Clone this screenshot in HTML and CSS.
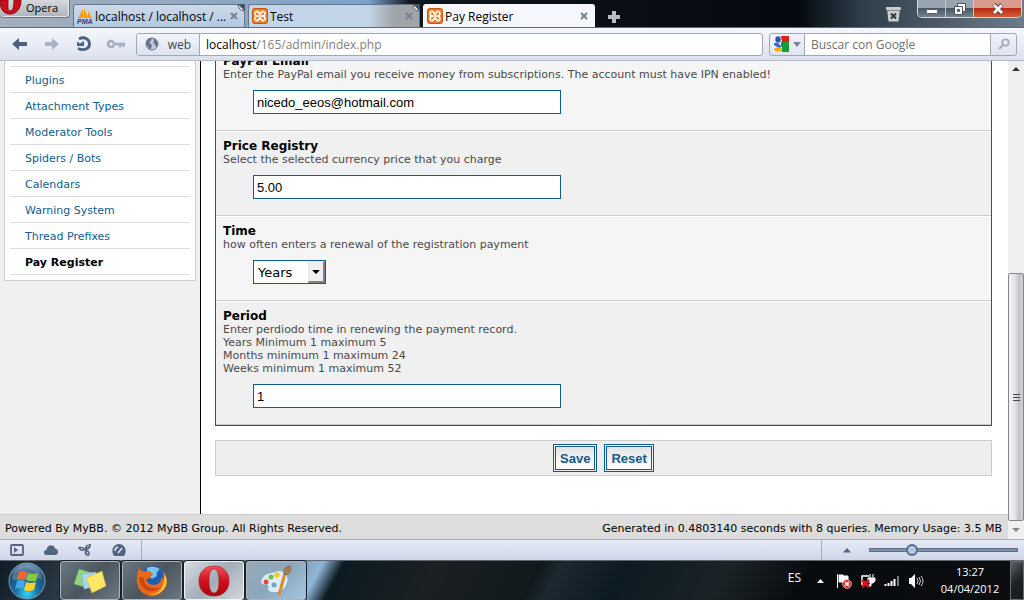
FILE: index.html
```html
<!DOCTYPE html>
<html lang="en">
<head>
    <meta charset="UTF-8">
    <meta name="viewport" content="width=device-width, initial-scale=1.0">
    <title>Pay Register</title>
    <link rel="stylesheet" href="styles.css">
</head>
<body>

    <!-- shared symbols -->
    <svg class="symbols" aria-hidden="true">
        <symbol id="xampp" viewBox="0 0 16 16">
            <rect x=".5" y=".5" width="15" height="15" rx="2" fill="#f47a20" stroke="#c9540c"/>
            <path d="M5.5 3.5C2.5 3 2.500 7 4.500 8C2.500 9 2.500 13 5.500 12.500C7.500 12.300 6.500 10 8 10C9.500 10 8.500 12.300 10.500 12.500C13.500 13 13.500 9 11.500 8C13.500 7 13.500 3 10.500 3.500C8.500 3.700 9.500 6 8 6C6.500 6 7.500 3.700 5.500 3.500Z" fill="none" stroke="#fff" stroke-width="1.800"/>
            <path d="M5 8h6" stroke="#fff" stroke-width="1.500"/>
        </symbol>
        <symbol id="close" viewBox="0 0 8 8">
            <path d="M1 1l6 6M7 1l-6 6" stroke="#778193" stroke-width="2"/>
        </symbol>
        <symbol id="fold" viewBox="0 0 8 8">
            <path d="M0 0L8 8V0Z" fill="#465566"/>
            <path d="M1 0Q1 7 8 7Z" fill="#e9edf2" stroke="#59636f"/>
        </symbol>
    </svg>

    <header class="titlebar">
        <button class="opera-menu">
            <svg width="22" height="16" viewBox="0 0 22 16"><path d="M0 0C0 10 4 14 10 14S21 9 21 0H14C14 7 13 11 10 11S8 6 8 0Z" fill="#c9101c" stroke="#8d0711"/></svg>
            Opera
        </button>
        <nav class="tabs">
            <div class="tab">
                <svg width="16" height="16" viewBox="0 0 16 16">
                    <path d="M1 10L6 1V10ZM7 10V0L11 10ZM11 10V3L15 10Z" fill="#f89c0e"/>
                    <text x="0" y="16" class="pma">PMA</text>
                </svg>
                <span class="tab-title">localhost / localhost / ...</span>
                <button class="tab-close" aria-label="Close tab"><svg width="8" height="8"><use href="#close"/></svg></button>
                <svg class="fold" width="8" height="8"><use href="#fold"/></svg>
            </div>
            <div class="tab tab-dim">
                <svg width="16" height="16"><use href="#xampp"/></svg>
                <span class="tab-title">Test</span>
                <button class="tab-close" aria-label="Close tab"><svg width="8" height="8"><use href="#close"/></svg></button>
                <svg class="fold" width="8" height="8"><use href="#fold"/></svg>
            </div>
            <div class="tab tab-active">
                <svg width="16" height="16"><use href="#xampp"/></svg>
                <span class="tab-title">Pay Register</span>
                <button class="tab-close" aria-label="Close tab"><svg width="8" height="8"><use href="#close"/></svg></button>
            </div>
        </nav>
        <button class="new-tab" aria-label="New tab">
            <svg width="12" height="12" viewBox="0 0 12 12"><path d="M6 0v12M0 6h12" stroke="#b9bdc1" stroke-width="4"/></svg>
        </button>
        <button class="closed-tabs" aria-label="Closed tabs">
            <svg width="15" height="15" viewBox="0 0 15 15"><path d="M1 2h13l-1.500 12.500h-10z" fill="#c9cdd0"/><rect y="0" width="15" height="3" rx="1" fill="#c9cdd0"/><path d="M1 3.500h13" stroke="#7f868b"/><path d="M5 6.500l5 5M10 6.500l-5 5" stroke="#2d343a" stroke-width="1.800"/></svg>
        </button>
        <div class="window-buttons">
            <button aria-label="Minimize"><svg width="12" height="12" viewBox="0 0 12 12"><rect x=".5" y="6.500" width="11" height="4" rx="1" fill="#fff" stroke="#59626c"/></svg></button>
            <button aria-label="Restore"><svg width="12" height="12" viewBox="0 0 12 12"><path d="M3.500.5h8v8h-8z" fill="#fff" stroke="#4a545f"/><path d="M.5 3.500h8v8h-8z" fill="#fff" stroke="#4a545f"/><path d="M3.500 6.500h2v2h-2z" fill="#788490" stroke="#4a545f"/></svg></button>
            <button class="window-close" aria-label="Close"><svg width="12" height="12" viewBox="0 0 12 12"><path d="M2 1.500l8 9M10 1.500l-8 9" stroke="#5d4145" stroke-width="4.500"/><path d="M2 2l8 8M10 2l-8 8" stroke="#fff" stroke-width="2.800"/></svg></button>
        </div>
    </header>

    <div class="toolbar">
        <button class="tool" aria-label="Back"><svg width="16" height="14" viewBox="0 0 16 14"><path d="M0 7L7 1V5H15V9H7V13Z" fill="#4b607e"/></svg></button>
        <button class="tool" aria-label="Forward"><svg width="16" height="14" viewBox="0 0 16 14"><path d="M15 7L8 1V5H1V9H8V13Z" fill="#aab3c3"/></svg></button>
        <button class="tool" aria-label="Reload"><svg width="16" height="16" viewBox="0 0 16 16"><path d="M3 3C8 0 13.500 3 13.500 8S8 15 2 12.500" fill="none" stroke="#4b607e" stroke-width="2.800"/><path d="M1 10V5.500L4 7.500L8 5V10Z" fill="#4b607e"/></svg></button>
        <button class="tool" aria-label="Wand"><svg width="20" height="10" viewBox="0 0 20 10"><circle cx="5" cy="5" r="3" fill="none" stroke="#a5afc0" stroke-width="2.500"/><path d="M8 5h11M14 5v3.500M17.500 5v3" stroke="#a5afc0" stroke-width="2.500"/></svg></button>
        <div class="address">
            <button class="badge">
                <svg width="14" height="14" viewBox="0 0 14 14"><circle cx="7" cy="7" r="6" fill="#c3cbd9" stroke="#6c7a92"/><path d="M1 4L4 1L7 1L6 4L4 5L6 7L7 9L5 13L3 10L1 7ZM8 1L11 3L13 6L12 10L10 9L10 7L8 6L9 4Z" fill="#66758e"/></svg>
                web
            </button>
            <div class="url" role="textbox" tabindex="0" aria-label="Address">localhost<span class="path">/165/admin/index.php</span></div>
        </div>
        <div class="search">
            <button class="engine" aria-label="Search engine">
                <svg width="16" height="16" viewBox="0 0 16 16"><path d="M8 0h8v6H9z" fill="#e0201b"/><path d="M8 6h8v10H8z" fill="#169a3d"/><path d="M0 0h8v5L6 8l3 3v5H0z" fill="#f6f8fc"/><ellipse cx="5" cy="3.500" rx="2.700" ry="3.300" fill="#2356b5"/><path d="M1 7h4l4 4-3 1L1 9Z" fill="#2f6ed0"/><ellipse cx="5" cy="13.500" rx="4" ry="2.300" fill="#f3ad14"/></svg>
                <svg width="8" height="5" viewBox="0 0 8 5"><path d="M0 0h8L4 5Z" fill="#7b859a"/></svg>
            </button>
            <input class="search-input" type="text" placeholder="Buscar con Google" aria-label="Search">
            <button class="go" aria-label="Go"><svg width="12" height="12" viewBox="0 0 12 12"><circle cx="7.500" cy="4.500" r="3.200" fill="none" stroke="#a4abba" stroke-width="1.800"/><path d="M5 7L1 11" stroke="#a4abba" stroke-width="2.200"/></svg></button>
        </div>
    </div>

    <div class="viewport">
        <div class="page">
            <div class="columns">
                <aside class="sidebar">
                    <ul class="menu">
                        <li><a href="#">Plugins</a></li>
                        <li><a href="#">Attachment Types</a></li>
                        <li><a href="#">Moderator Tools</a></li>
                        <li><a href="#">Spiders / Bots</a></li>
                        <li><a href="#">Calendars</a></li>
                        <li><a href="#">Warning System</a></li>
                        <li><a href="#">Thread Prefixes</a></li>
                        <li><a href="#" class="current">Pay Register</a></li>
                    </ul>
                </aside>
                <main class="content">
                    <form>
                        <div class="settings">
                            <div class="row">
                                <label for="email">PayPal Email</label>
                                <p>Enter the PayPal email you receive money from subscriptions. The account must have IPN enabled!</p>
                                <input type="text" id="email" value="nicedo_eeos@hotmail.com">
                            </div>
                            <div class="row alt">
                                <label for="price">Price Registry</label>
                                <p>Select the selected currency price that you charge</p>
                                <input type="text" id="price" value="5.00">
                            </div>
                            <div class="row">
                                <label for="time">Time</label>
                                <p>how often enters a renewal of the registration payment</p>
                                <div class="select">
                                    <select id="time">
                                        <option>Weeks</option>
                                        <option>Months</option>
                                        <option selected>Years</option>
                                    </select>
                                </div>
                            </div>
                            <div class="row alt">
                                <label for="period">Period</label>
                                <p>Enter perdiodo time in renewing the payment record.<br>Years Minimum 1 maximum 5<br>Months minimum 1 maximum 24<br>Weeks minimum 1 maximum 52</p>
                                <input type="text" id="period" value="1">
                            </div>
                        </div>
                        <div class="form-buttons">
                            <button type="submit">Save</button>
                            <button type="reset">Reset</button>
                        </div>
                    </form>
                </main>
            </div>
            <footer class="footer">
                <span>Powered By MyBB. © 2012 MyBB Group. All Rights Reserved.</span>
                <span>Generated in 0.4803140 seconds with 8 queries. Memory Usage: 3.5 MB</span>
            </footer>
        </div>
        <div class="scrollbar">
            <svg width="16" height="16" viewBox="0 0 16 16"><path d="M4 10L8 6l4 4Z" fill="#303030"/></svg>
            <div class="scroll-track"></div>
            <div class="scroll-thumb"><svg width="7" height="9" viewBox="0 0 7 9"><path d="M0 1.500h7M0 4.500h7M0 7.500h7" stroke="#45484d"/></svg></div>
            <svg width="16" height="18" viewBox="0 0 16 18"><path d="M4 7h8l-4 4Z" fill="#858585"/></svg>
        </div>
    </div>

    <div class="statusbar">
        <div class="status-icons">
            <button aria-label="Panels"><svg width="14" height="12" viewBox="0 0 14 12"><rect x="1" y="1" width="12" height="10" rx="1" fill="none" stroke="#536480" stroke-width="1.800"/><path d="M4 3v6L8 6Z" fill="#536480"/></svg></button>
            <button aria-label="Opera Link"><svg width="14" height="12" viewBox="0 0 14 12"><path d="M3 11C-1 11-1 6 2.500 6C3 0 10 0 11 4.500C15 5 15 11 11 11Z" fill="#536480"/></svg></button>
            <button aria-label="Opera Unite"><svg width="14" height="12" viewBox="0 0 14 12"><path d="M7 6C6 2 9 0 13 0C13 4 11 6 7 6ZM7 6C5 8 1 7 0 3C4 2 7 3 7 6ZM7 6C11 6 13 8 11 12C7 12 6 9 7 6Z" fill="#536480"/><path d="M9 3l2-1.500M3 4.500l2 .5M9 8l1 2" stroke="#dfe3f0"/></svg></button>
            <button aria-label="Opera Turbo"><svg width="14" height="12" viewBox="0 0 14 12"><path d="M2 12C-2 6 2 0 7 0S16 6 12 12Z" fill="#536480"/><path d="M6 9L10 4M3 7q0-3 3-4" stroke="#e2e6f2" stroke-width="1.500" fill="none"/></svg></button>
        </div>
        <div class="zoom">
            <svg width="8" height="5" viewBox="0 0 8 5"><path d="M0 4.500L4 0l4 4.500Z" fill="#536480"/></svg>
            <input type="range" min="0" max="100" value="27" aria-label="Zoom">
        </div>
    </div>

    <div class="taskbar">
        <button class="start" aria-label="Start">
            <svg width="38" height="38" viewBox="0 0 38 38">
                <defs><radialGradient id="orb" cx=".5" cy=".85" r=".9"><stop offset="0" stop-color="#35d3f5"/><stop offset=".35" stop-color="#1673a8"/><stop offset=".7" stop-color="#1c4d75"/><stop offset="1" stop-color="#7fa8c4"/></radialGradient></defs>
                <circle cx="19" cy="19" r="18" fill="url(#orb)" stroke="#7f9bb0"/>
                <path d="M4 17C5 7 12 3 19 3S33 8 34 17C24 14 14 20 4 17Z" fill="#fff" opacity=".22"/>
                <path d="M11 10Q15 8 19 10L17 18Q13 16 9 18Z" fill="#f1672d"/>
                <path d="M20 11Q25 13 30 11L28 19Q23 20 18 18Z" fill="#8dc63f"/>
                <path d="M9 19Q13 17 17 19L15 27Q11 25 7 27Z" fill="#46a7e8"/>
                <path d="M18 20Q23 22 28 20L26 28Q21 30 16 28Z" fill="#fccd2d"/>
            </svg>
        </button>
        <div class="tasks">
            <button class="task" aria-label="Sticky Notes">
                <svg width="34" height="30" viewBox="0 0 34 30"><path d="M6 3L19 7L15 22L1 18Z" fill="#8fd581" stroke="#63a85a" stroke-width=".5"/><path d="M9 8L23 6L26 20L11 23Z" fill="#a8d7fb" stroke="#6da8d8" stroke-width=".5"/><path d="M13 12L29 5L33 20L19 27Z" fill="#fde765" stroke="#c9aa2d" stroke-width=".5"/></svg>
            </button>
            <button class="task" aria-label="Firefox">
                <svg width="32" height="32" viewBox="0 0 32 32"><circle cx="17" cy="14" r="13" fill="#1b5fae"/><path d="M11 3Q17 0 24 4Q19 8 21 11L16 14L11 9Z" fill="#7cc4ee"/><path d="M3 3Q5 7 10 6Q13 5 16 8Q18 11 14 12Q12 15 10 14Q12 20 18 20Q25 19 26 12L28 14Q28 9 26 6Q35 15 28 25Q22 32 14 31Q3 29 1 18Q0 10 3 3Z" fill="#e8691b"/><path d="M28 8Q34 17 27 25Q21 31 14 29Q24 29 27 20Q29 14 28 8Z" fill="#fbc635"/><path d="M3 12Q3 23 13 26Q20 27 24 22Q17 25 12 21Q8 19 8 13Z" fill="#c94512"/></svg>
            </button>
            <button class="task task-open" aria-label="Opera">
                <svg width="32" height="32" viewBox="0 0 32 32"><defs><linearGradient id="red" x2="0" y2="1"><stop offset="0" stop-color="#f3525a"/><stop offset=".5" stop-color="#d1101b"/><stop offset="1" stop-color="#a9070f"/></linearGradient></defs><path fill-rule="evenodd" d="M16 1C25 1 31 7 31 16S25 31 16 31S1 25 1 16S7 1 16 1ZM16 4C12 4 11 10 11 16S12 28 16 28S21 22 21 16S20 4 16 4Z" fill="url(#red)" stroke="#a60d17" stroke-width=".6"/></svg>
            </button>
            <button class="task task-paint" aria-label="Paint">
                <svg width="34" height="32" viewBox="0 0 34 32"><path d="M14 7C23 3 30 8 29 16C28 25 18 30 11 27C6 25 11 21 8 20C4 20 1 20 2 15C4 10 8 8 14 7Z" fill="#dcecf8" stroke="#79a6c6"/><circle cx="7" cy="17" r="2.500" fill="#e2493c"/><circle cx="12" cy="12" r="2.500" fill="#70bd48"/><circle cx="18" cy="10" r="2.700" fill="#f6c829"/><circle cx="15" cy="20" r="2.500" fill="#6ba5cf"/><path d="M20 30L26 8" stroke="#e08a30" stroke-width="3"/><path d="M25 9Q24 2 31 1Q34 5 28 10Z" fill="#a57b50" stroke="#805932" stroke-width=".6"/></svg>
            </button>
        </div>
        <div class="tray">
            <span class="lang">ES</span>
            <svg class="expand" width="7" height="4" viewBox="0 0 7 4"><path d="M0 4L3.500 0L7 4Z" fill="#fff"/></svg>
            <svg width="16" height="16" viewBox="0 0 16 16"><path d="M1.500 1v14M3 2h4l1 1h4v6H3Z" stroke="#fff" fill="#fff"/><circle cx="11" cy="11" r="4.500" fill="#d9342b" stroke="#fff" stroke-width=".5"/><path d="M9 9l4 4M13 9l-4 4" stroke="#fff" stroke-width="1.500"/></svg>
            <svg width="16" height="16" viewBox="0 0 16 16"><path d="M2 12V3h7" fill="none" stroke="#fff" stroke-width="1.500"/><path d="M10 1v4M13 1v4M8 5h7v3l-2 2h-3L8 8ZM11 9v4H8" fill="#fff" stroke="#fff"/><path d="M2 7l7 7M9 7l-7 7" stroke="#e8101a" stroke-width="2.500"/></svg>
            <svg width="16" height="16" viewBox="0 0 16 16"><path d="M1.500 11v2M4.500 10v3M7.500 8v5M10.500 6v7" stroke="#fff" stroke-width="2"/><path d="M14 3v10" stroke="#9aa0a4" stroke-width="1.500"/></svg>
            <svg width="16" height="16" viewBox="0 0 16 16"><path d="M1 5h2l4-4v14l-4-4H1Z" fill="#fff"/><path d="M9 5q2 3 0 6M11 4q3 4 0 8M13 3q4 5 0 10" fill="none" stroke="#c6cacc"/></svg>
            <div class="clock"><time>13:27</time><time>04/04/2012</time></div>
            <button class="show-desktop" aria-label="Show desktop"></button>
        </div>
    </div>

</body>
</html>
```
FILE: styles.css
```css
*,
*::before,
*::after {
    box-sizing: border-box;
}

body {
    display: flex;
    flex-direction: column;
    height: 100vh;
    margin: 0;
    overflow: hidden;
    font-family: "Open Sans", sans-serif;
    font-size: 11px;
    color: #000;
}

button {
    display: flex;
    align-items: center;
    justify-content: center;
    padding: 0;
    border: 0;
    background: none;
    font: inherit;
    color: inherit;
}

svg {
    flex: none;
}

.symbols {
    position: absolute;
    width: 0;
    height: 0;
}

/* Title bar and tabs */
.titlebar {
    display: flex;
    align-items: flex-start;
    height: 28px;
    border-bottom: 1px solid #5f6a77;
    background: linear-gradient(90deg, #a3b0bd 0, #8da7c2 22%, #7ba2cb 36%, #10161e 40%, #05090f 78%, #2d3c48 84%, #6d7c89 100%);
}

.opera-menu {
    gap: 4px;
    width: 70px;
    height: 18px;
    padding-bottom: 2px;
    border: 1px solid #6d7680;
    border-width: 0 1px 1px 0;
    border-radius: 0 0 4px 4px;
    background: linear-gradient(#d5d8dc, #aeb3b9);
    justify-content: flex-start;
    box-shadow: inset -1px -1px #e6e9ec;
}

.tabs {
    display: flex;
    align-self: flex-end;
    gap: 3px;
    margin-left: 3px;
}

.tab {
    position: relative;
    display: flex;
    align-items: center;
    gap: 2px;
    width: 172px;
    height: 23px;
    padding: 0 6px 0 3px;
    border: 1px solid #66758a;
    border-bottom: 0;
    border-radius: 3px 3px 0 0;
    background: linear-gradient(#cddbea, #b4c9df);
    font-size: 12px;
}

.tab-dim {
    background: linear-gradient(90deg, #c3d6e9 70%, #a0a5aa 85%);
}

.tab-active {
    border-color: #f8f9fd;
    background: #f5f7fc;
}

.tab-title {
    flex: 1;
    overflow: hidden;
    white-space: nowrap;
}

.fold {
    position: absolute;
    top: -1px;
    right: -1px;
}

.pma {
    font: italic bold 7px "Liberation Sans", sans-serif;
    fill: #34368a;
}

.new-tab {
    margin: 11px auto 0 13px;
}

.closed-tabs {
    margin: 7px 16px 0 0;
}

.window-buttons {
    display: flex;
    margin-right: 2px;
    border: 1px solid #d4dae0;
    border-top: 0;
    border-radius: 0 0 5px 5px;
    overflow: hidden;
}

.window-buttons button {
    width: 28px;
    height: 17px;
    border-right: 1px solid #c1c8ce;
    background: linear-gradient(#98a4b0 45%, #495765 50%, #75828f);
}

.window-buttons .window-close {
    width: 47px;
    border: 0;
    background: linear-gradient(#d99b8d 45%, #b92d16 50%, #d35c3a);
}

/* Address bar */
.toolbar {
    display: flex;
    align-items: center;
    height: 33px;
    padding: 0 7px 0 4px;
    border-bottom: 1px solid #b4bacd;
    background: linear-gradient(#f5f7fc, #dce1ef);
    font-size: 12px;
}

.tool {
    width: 32px;
    height: 24px;
}

.address {
    display: flex;
    flex: 1;
    height: 23px;
    margin: 0 6px 0 4px;
    border: 1px solid #a0a7b8;
    border-radius: 3px;
    background: #fff;
}

.badge {
    gap: 9px;
    width: 63px;
    border-right: 1px solid #a0a7b8;
    background: linear-gradient(#f3f5fb, #dde2f0);
    border-radius: 3px 0 0 3px;
    color: #3c4759;
}

.url {
    flex: 1;
    padding-left: 6px;
    line-height: 21px;
}

.path {
    color: #7f7f7f;
}

.search {
    display: flex;
    width: 248px;
    height: 23px;
    border: 1px solid #a0a7b8;
    border-radius: 3px;
}

.engine {
    gap: 4px;
    width: 34px;
}

.search-input {
    flex: 1;
    min-width: 0;
    padding: 0 6px;
    border: 1px solid #a0a7b8;
    border-width: 0 1px;
    background: #fff;
    font: inherit;
}

.search-input::placeholder {
    color: #707070;
}

.go {
    width: 25px;
}

/* Web page, scrolled to its end */
.viewport {
    display: flex;
    flex: 1;
    min-height: 0;
    background: #fff;
    font-family: Verdana, "DejaVu Sans", sans-serif;
}

.page {
    display: flex;
    flex: 1;
    flex-direction: column;
    justify-content: flex-end;
    overflow: hidden;
}

.columns {
    display: flex;
    flex: none;
}

.sidebar {
    width: 201px;
    padding: 0 4px;
    border-right: 1px solid #000;
    background: #f0f0f0;
}

.menu {
    margin: 0;
    padding: 20px 5px 5px;
    border: 1px solid #ccc;
    border-top: 0;
    background: #fff;
    list-style: none;
}

.menu li {
    height: 26px;
    padding-left: 15px;
    border-top: 1px solid #ddd;
    line-height: 27px;
}

.menu li:last-child {
    height: 27px;
    border-bottom: 1px solid #ddd;
}

.menu a {
    color: #0f5c8e;
    text-decoration: none;
}

.menu .current {
    color: #000;
    font-weight: bold;
}

.content {
    flex: 1;
    padding: 0 16px 38px 14px;
}

.settings {
    border: 1px solid #0f5c8e;
    border-top: 0;
}

.row {
    padding: 7px 7px 16px;
    border-top: 1px solid #fff;
    border-bottom: 1px solid #ccc;
    background: #f5f5f5;
}

.row.alt {
    background: #f0f0f0;
}

.row label {
    display: block;
    font-size: 12px;
    font-weight: bold;
    line-height: 14px;
}

.row p {
    margin: 0 0 9px;
    color: #4a4a4a;
    line-height: 13px;
}

.row input {
    display: block;
    width: 308px;
    height: 24px;
    margin-left: 30px;
    padding: 0 3px;
    border: 1px solid #0f5c8e;
    background: #fff;
    font: 13px "Liberation Sans", Arial, sans-serif;
}

.select {
    position: relative;
    width: 73px;
    margin-left: 30px;
}

.select select {
    display: block;
    width: 100%;
    height: 24px;
    padding: 0 4px;
    border: 1px solid #0f5c8e;
    border-radius: 0;
    background: #fff;
    color: #000;
    font: 13px "DejaVu Sans", sans-serif;
    appearance: none;
}

.select::before {
    content: "";
    position: absolute;
    top: 1px;
    right: 1px;
    width: 17px;
    height: 22px;
    border: 1px solid #e4e4e4;
    border-right: 2px solid #808080;
    border-bottom: 2px solid #808080;
    background: #f0f0f0;
    pointer-events: none;
}

.select::after {
    content: "";
    position: absolute;
    top: 10px;
    right: 6px;
    border: 4px solid transparent;
    border-top-color: #000;
    border-bottom: 0;
    pointer-events: none;
}

.form-buttons {
    display: flex;
    justify-content: center;
    gap: 7px;
    margin-top: 14px;
    padding: 3px;
    border: 1px solid #ccc;
    background: #eee;
}

.form-buttons button {
    height: 28px;
    padding: 0 4px;
    border: 3px double #0f5c8e;
    background: linear-gradient(#e4e4e4, #fff);
    color: #0f5c8e;
    font: bold 13px "Liberation Sans", Arial, sans-serif;
}

.footer {
    display: flex;
    flex: none;
    justify-content: space-between;
    height: 25px;
    padding: 0 6px 0 5px;
    border-top: 1px solid #ccc;
    background: #ddd;
    line-height: 27px;
}

.scrollbar {
    display: flex;
    flex-direction: column;
    width: 16px;
    background: #f0f0f0;
}

.scroll-track {
    flex: 197;
}

.scroll-thumb {
    display: flex;
    flex: 247;
    align-items: center;
    justify-content: center;
    border: 1px solid #85858c;
    border-radius: 2px;
    background: linear-gradient(90deg, #f5f5f5, #e3e3e5 45%, #c1c1c8 70%, #cfcfd4);
}

/* Browser status bar */
.statusbar {
    display: flex;
    justify-content: space-between;
    height: 21px;
    border-top: 1px solid #a9adb8;
    background: linear-gradient(#e6eaf6, #d0d6e7);
}

.status-icons {
    display: flex;
    gap: 20px;
    padding: 0 15px 0 10px;
    border-right: 1px solid #a9adb8;
}

.zoom {
    display: flex;
    align-items: center;
    gap: 18px;
    padding: 0 6px 0 21px;
    border-left: 1px solid #a9adb8;
}

.zoom input {
    width: 149px;
    height: 14px;
    margin: 0;
    background: none;
    appearance: none;
}

.zoom input::-webkit-slider-runnable-track {
    height: 4px;
    border: 1px solid #5f7391;
    background: #7d90ab;
}

.zoom input::-webkit-slider-thumb {
    width: 12px;
    height: 12px;
    margin-top: -5px;
    border: 2px solid #506b8d;
    border-radius: 50%;
    background: #b4c8dc;
    appearance: none;
}

/* Windows taskbar */
.taskbar {
    display: flex;
    height: 40px;
    border-top: 1px solid #60676f;
    background: linear-gradient(118deg, #101b25 0, #26343f 6%, #5f7383 25%, #86abc9 30%, #90b6d8 31%, #0c1a21 33%, #1b2022 42%, #11191d 52%, #1c2830 54%, #0c1a21 60%, #1b2327 70%, #080b0e 78%, #0b0d0f 100%);
}

.start {
    width: 56px;
    padding-right: 2px;
}

.tasks {
    display: flex;
    gap: 2px;
    padding-left: 4px;
}

.task {
    width: 60px;
    height: 39px;
    border: 1px solid #aab4bc;
    border-radius: 3px;
    background: linear-gradient(135deg, #6c7880, #4a555e 50%, #6b7881);
    box-shadow: 0 0 0 1px #18212a;
}

.task-open {
    background: linear-gradient(135deg, #d7dde2, #a2adb7 50%, #d3d9de);
    border-color: #f0f3f5;
}

.task-paint {
    background: linear-gradient(135deg, #97a8b5, #8da7bc 50%, #a4c6e0);
}

.tray {
    display: flex;
    align-items: center;
    gap: 8px;
    margin-left: auto;
    color: #fff;
}

.lang {
    padding-bottom: 6px;
    font-size: 12px;
}

.expand {
    margin: 0 4px 0 8px;
}

.clock {
    display: flex;
    flex-direction: column;
    gap: 1px;
    width: 72px;
    margin-left: 2px;
    text-align: center;
    line-height: 16px;
}

.show-desktop {
    align-self: stretch;
    width: 14px;
    margin-left: -4px;
    border: 1px solid #656b70;
    background: linear-gradient(135deg, #5c6166, #202428 50%, #15181b);
}
```
